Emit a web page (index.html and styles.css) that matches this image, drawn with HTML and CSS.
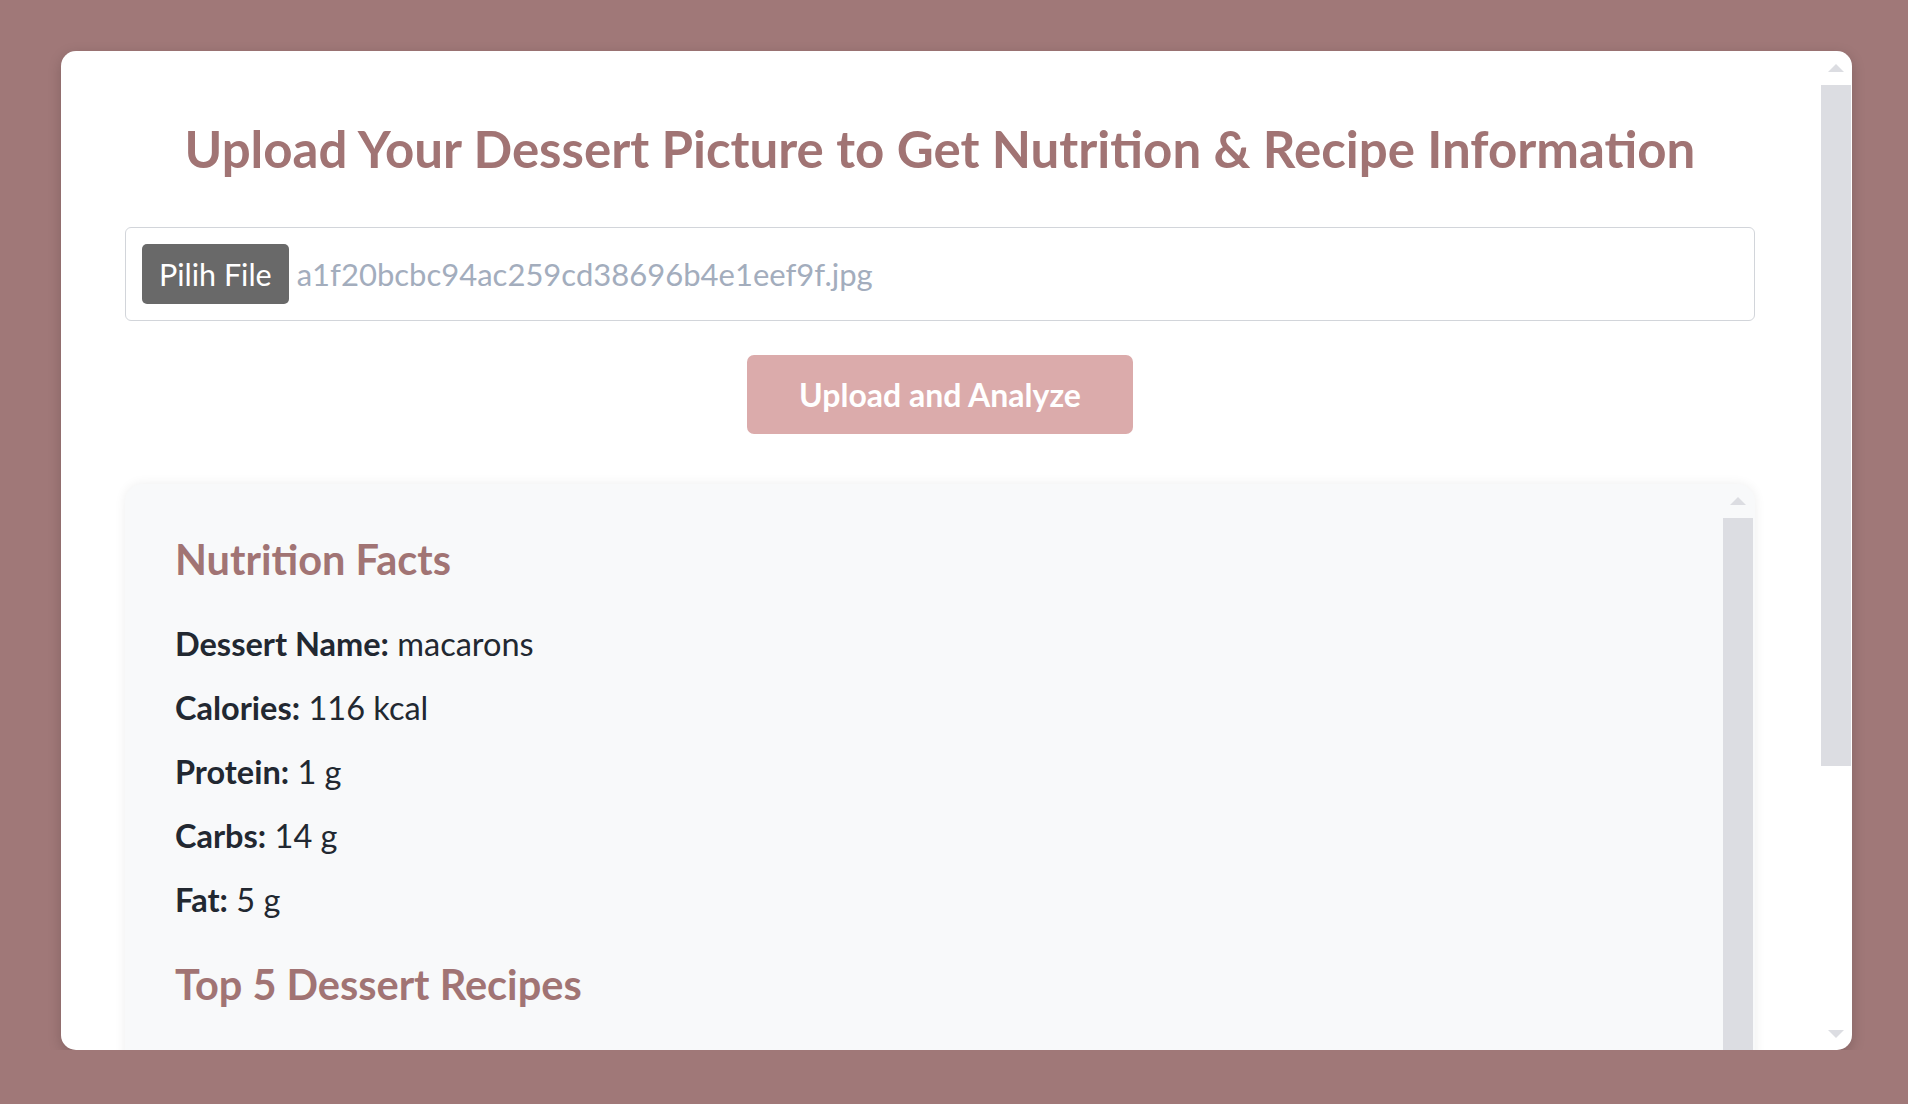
FILE: index.html
```html
<!DOCTYPE html>
<html lang="en">
<head>
<meta charset="utf-8">
<title>Dessert Nutrition &amp; Recipe</title>
<link rel="stylesheet" href="styles.css">
</head>
<body>
<main class="card">
  <div class="card-content">
    <h1 class="title">Upload Your Dessert Picture to Get Nutrition &amp; Recipe Information</h1>
    <div class="file-field">
      <span class="file-btn">Pilih File</span>
      <span class="file-name">a1f20bcbc94ac259cd38696b4e1eef9f.jpg</span>
    </div>
    <div class="actions">
      <button class="upload-btn" type="button">Upload and Analyze</button>
    </div>
    <section class="results">
      <div class="results-content">
        <h2 class="section-title">Nutrition Facts</h2>
        <p class="fact"><strong>Dessert Name:</strong> macarons</p>
        <p class="fact"><strong>Calories:</strong> 116 kcal</p>
        <p class="fact"><strong>Protein:</strong> 1 g</p>
        <p class="fact"><strong>Carbs:</strong> 14 g</p>
        <p class="fact"><strong>Fat:</strong> 5 g</p>
        <h2 class="section-title">Top 5 Dessert Recipes</h2>
      </div>
      <div class="scrollbar scrollbar-inner">
        <div class="sb-arrow"><svg width="16" height="8" viewBox="0 0 16 8"><polygon points="0,8 8,0 16,8" fill="#dcdde2"/></svg></div>
        <div class="sb-track"><div class="sb-thumb sb-thumb-inner"></div></div>
      </div>
    </section>
  </div>
  <div class="scrollbar scrollbar-outer">
    <div class="sb-arrow"><svg width="16" height="8" viewBox="0 0 16 8"><polygon points="0,8 8,0 16,8" fill="#dcdde2"/></svg></div>
    <div class="sb-track"><div class="sb-thumb sb-thumb-outer"></div></div>
    <div class="sb-arrow sb-arrow-down"><svg width="16" height="8" viewBox="0 0 16 8"><polygon points="0,0 16,0 8,8" fill="#dcdde2"/></svg></div>
  </div>
</main>
</body>
</html>
```
FILE: styles.css
```css
html, body {
  margin: 0;
  padding: 0;
}

body {
  background: #a07878;
  font-family: "Lato", "Open Sans", "Noto Sans", sans-serif;
  color: #222831;
  overflow: hidden;
}

.card {
  display: flex;
  margin: 51px 56px 0 61px;
  height: 999px;
  background: #ffffff;
  border-radius: 15px;
  box-shadow: 0 4px 14px rgba(0, 0, 0, 0.18);
  overflow: hidden;
}

.card-content {
  flex: 1;
  min-width: 0;
  padding: 68px 65px 0 64px;
}

.title {
  margin: 0 0 48px;
  font-size: 51px;
  line-height: 60px;
  font-weight: 700;
  color: #a17474;
  text-align: center;
}

.file-field {
  display: flex;
  align-items: center;
  gap: 8px;
  border: 1px solid #d2d5da;
  border-radius: 6px;
  padding: 16px;
  background: #ffffff;
}

.file-btn {
  display: flex;
  align-items: center;
  justify-content: center;
  height: 60px;
  padding: 0 17px;
  background: #696969;
  color: #ffffff;
  font-size: 30.5px;
  border-radius: 5px;
}

.file-name {
  font-size: 31px;
  color: #a3adbd;
}

.actions {
  display: flex;
  justify-content: center;
  margin-top: 34px;
}

.upload-btn {
  height: 79px;
  padding: 0 52px;
  border: none;
  border-radius: 7px;
  background: #dbabab;
  color: #ffffff;
  font-family: inherit;
  font-size: 32px;
  font-weight: 700;
}

.results {
  display: flex;
  margin-top: 50px;
  height: 883px;
  background: #f8f9fa;
  border-radius: 18px;
  box-shadow: 0 0 12px rgba(0, 0, 0, 0.07);
  overflow: hidden;
}

.results-content {
  flex: 1;
  min-width: 0;
  padding: 11px 50px 40px 50px;
}

.section-title {
  margin: 40px 0 41px;
  font-size: 41.5px;
  line-height: 48px;
  font-weight: 700;
  color: #a17474;
}

.fact {
  margin: 24px 0;
  font-size: 32.5px;
  line-height: 40px;
}

.fact strong {
  font-weight: 700;
}

/* scrollbars */
.scrollbar {
  flex: none;
  width: 32px;
  display: flex;
  flex-direction: column;
}

.sb-arrow {
  height: 34px;
  display: flex;
  align-items: center;
  justify-content: center;
  flex: none;
}

.sb-arrow svg {
  display: block;
}

.sb-arrow-down {
  padding-top: 2px;
  box-sizing: border-box;
}

.sb-track {
  flex: 1;
  display: flex;
  flex-direction: column;
}

.sb-thumb {
  margin: 0 1px;
  background: #dcdde2;
  flex: none;
}

.sb-thumb-outer {
  height: 681px;
}

.sb-thumb-inner {
  height: 640px;
}

.scrollbar-inner {
  margin-right: 1px;
}
```
